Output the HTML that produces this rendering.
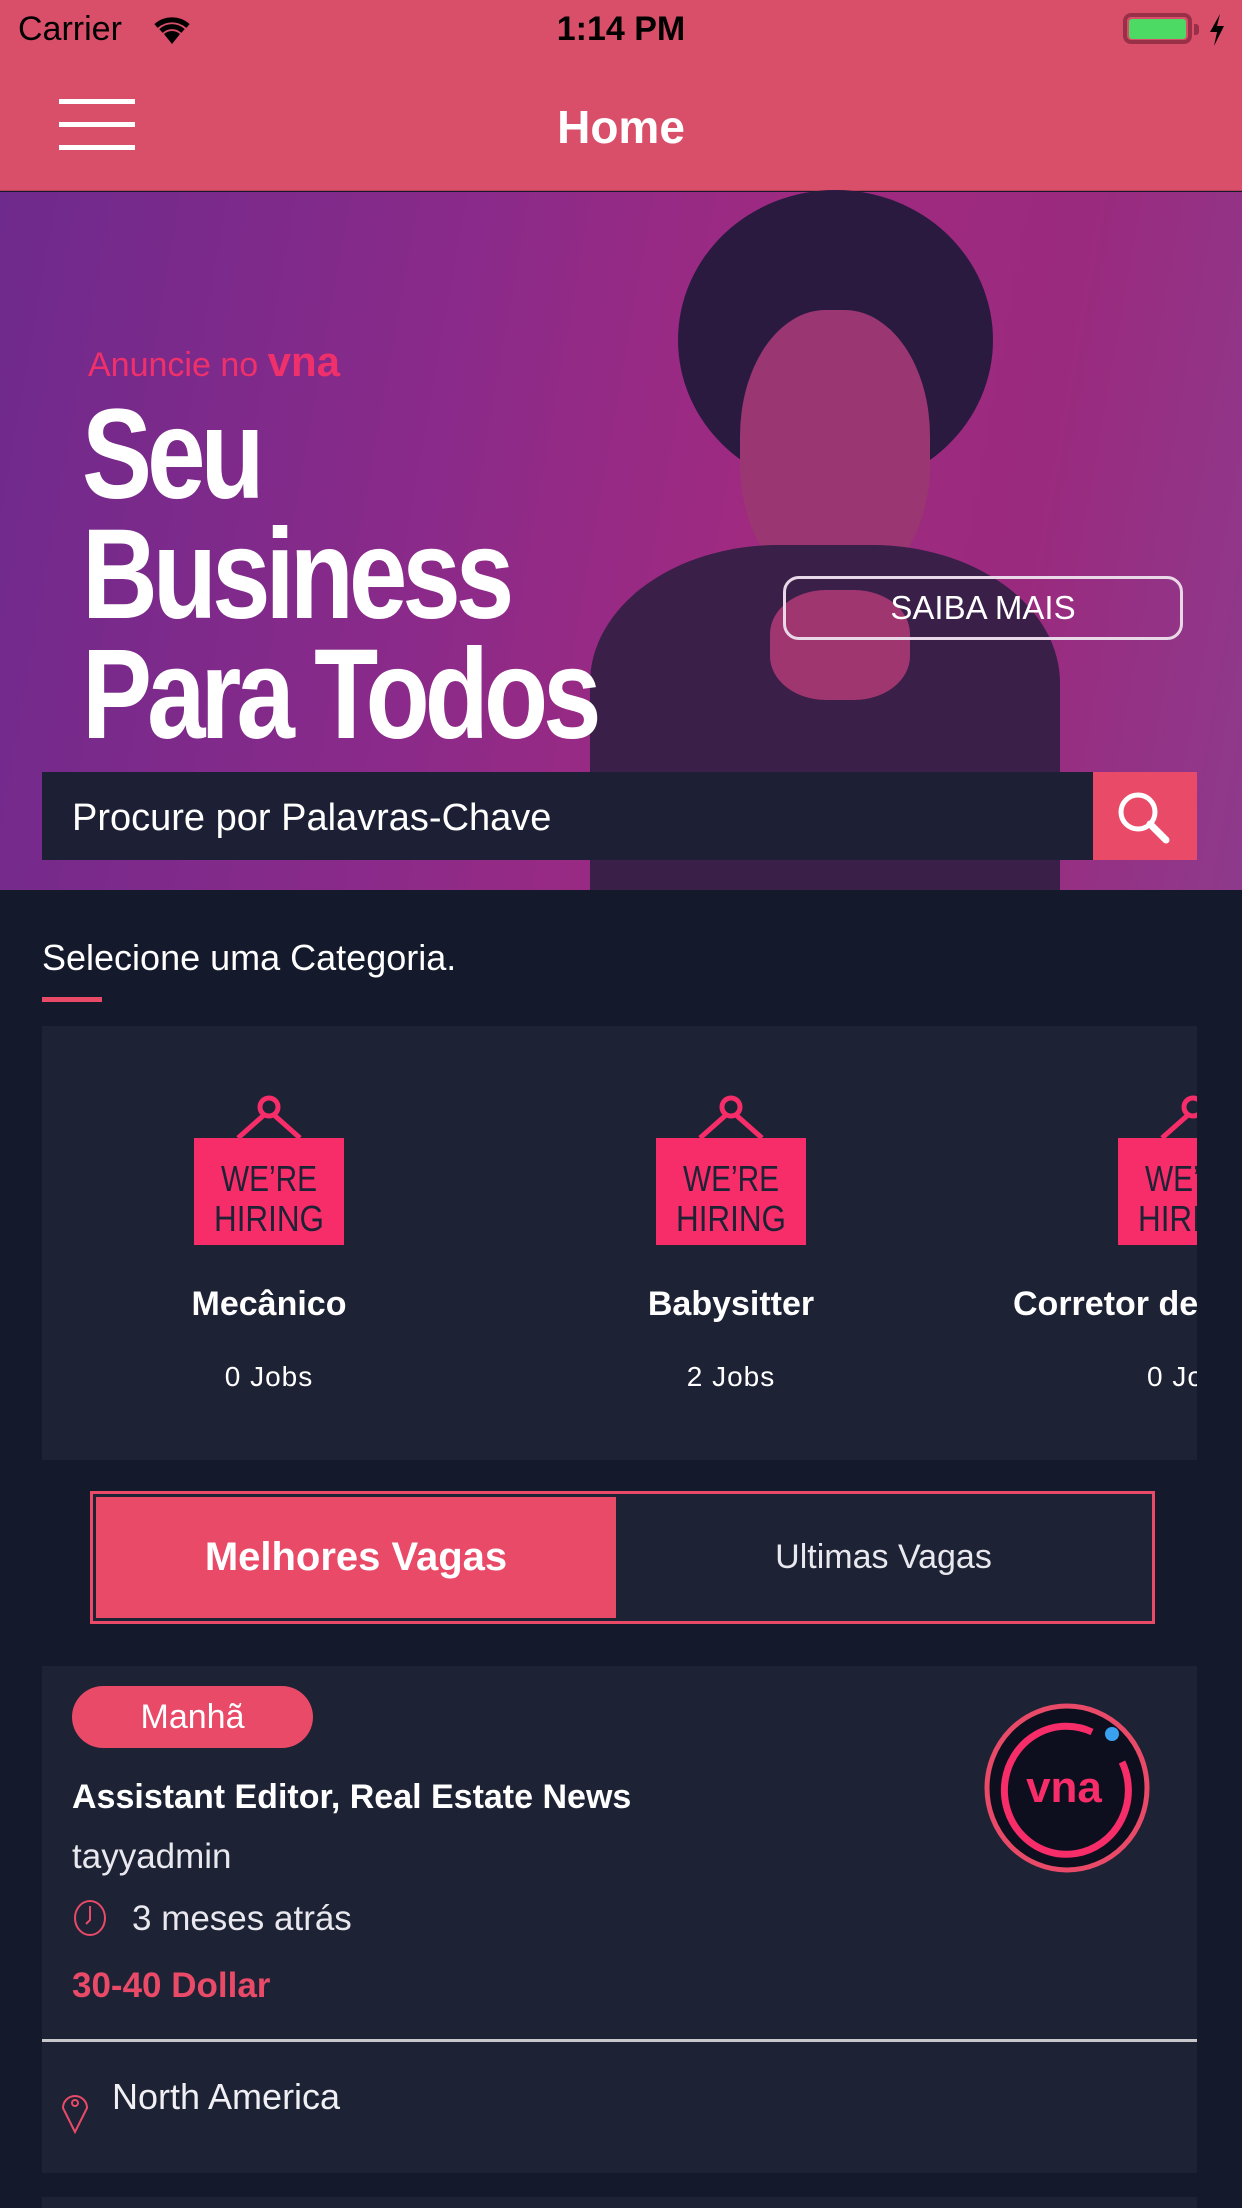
<!DOCTYPE html>
<html><head><meta charset="utf-8"><style>
*{margin:0;padding:0;box-sizing:border-box}
body{width:1242px;height:2208px;overflow:hidden;background:#141a2c;font-family:"Liberation Sans",sans-serif;position:relative;color:#fff}
.abs{position:absolute}
</style></head><body>
<div class="abs" style="left:0;top:0;width:1242px;height:191px;background:#d94f6a;border-bottom:1px solid #b8405a"></div>
<div class="abs" style="left:18px;top:10px;font-size:34px;color:#000">Carrier</div>
<svg class="abs" style="left:150px;top:14px" width="44" height="32" viewBox="0 0 44 32"><path d="M22 30 L14 20 A12 12 0 0 1 30 20 Z" fill="#000"/><path d="M6 12 A24 24 0 0 1 38 12" stroke="#000" stroke-width="5" fill="none"/><path d="M11 17 A16 16 0 0 1 33 17" stroke="#000" stroke-width="5" fill="none"/></svg>
<div class="abs" style="left:0;width:1242px;top:10px;text-align:center;font-size:34px;font-weight:bold;color:#000">1:14 PM</div>
<div class="abs" style="left:1123px;top:13px;width:69px;height:31px;border:4px solid #9a2f48;border-radius:8px"></div>
<div class="abs" style="left:1129px;top:19px;width:57px;height:20px;background:#4cd964;border-radius:3px"></div>
<div class="abs" style="left:1194px;top:24px;width:5px;height:11px;background:#9a2f48;border-radius:0 3px 3px 0"></div>
<svg class="abs" style="left:1208px;top:14px" width="18" height="32" viewBox="0 0 18 32"><path d="M12 0 L2 18 H9 L6 32 L16 12 H9 Z" fill="#000"/></svg>
<div class="abs" style="left:59px;top:99px;width:76px;height:5px;background:#fff"></div>
<div class="abs" style="left:59px;top:122px;width:76px;height:5px;background:#fff"></div>
<div class="abs" style="left:59px;top:145px;width:76px;height:5px;background:#fff"></div>
<div class="abs" style="left:0;width:1242px;top:100px;text-align:center;font-size:46px;font-weight:bold">Home</div>

<div class="abs" style="left:0;top:192px;width:1242px;height:698px;background:linear-gradient(100deg,#6e2a8c 0%,#8a2a8a 35%,#a02a80 60%,#9a2a7e 80%,#8e3a8c 100%)"></div>
<div class="abs" style="left:678px;top:190px;width:315px;height:300px;border-radius:50%;background:#2a1a40"></div>
<div class="abs" style="left:740px;top:310px;width:190px;height:280px;border-radius:45%;background:#9a3672"></div>
<div class="abs" style="left:590px;top:545px;width:470px;height:345px;border-radius:40% 40% 0 0;background:#3a1f48"></div>
<div class="abs" style="left:770px;top:590px;width:140px;height:110px;border-radius:40%;background:#a03670"></div>
<div class="abs" style="left:88px;top:338px;font-size:34px;color:#f0306a">Anuncie no <b style="font-size:42px">vna</b></div>
<div class="abs" style="left:82px;top:395px;font-size:128px;font-weight:bold;line-height:120px;letter-spacing:-6px;transform:scaleX(0.82);transform-origin:0 0">Seu<br>Business<br>Para Todos</div>
<div class="abs" style="left:783px;top:576px;width:400px;height:64px;border:3px solid #e8d8e8;border-radius:16px;text-align:center;line-height:58px;font-size:33px">SAIBA MAIS</div>
<div class="abs" style="left:42px;top:772px;width:1051px;height:88px;background:#1d2034;font-size:38px;line-height:92px;padding-left:30px">Procure por Palavras-Chave</div>
<div class="abs" style="left:1093px;top:772px;width:104px;height:88px;background:#e84a68"></div>
<svg class="abs" style="left:1112px;top:786px" width="64" height="64" viewBox="0 0 64 64"><circle cx="26" cy="26" r="17" stroke="#fff" stroke-width="5" fill="none"/><path d="M38 38 L54 54" stroke="#fff" stroke-width="7" stroke-linecap="round"/></svg>

<div class="abs" style="left:42px;top:937px;font-size:36px">Selecione uma Categoria.</div>
<div class="abs" style="left:42px;top:997px;width:60px;height:5px;background:#e84a68"></div>
<div class="abs" style="left:42px;top:1026px;width:1155px;height:434px;background:#1e2235"></div>
<div class="abs" style="left:42px;top:1026px;width:1155px;height:434px;overflow:hidden">
 <div class="abs" style="left:152px;top:69px"><svg width="150" height="150" viewBox="0 0 150 150"><circle cx="75" cy="12" r="9" stroke="#f72d6a" stroke-width="5" fill="none"/><path d="M70 20 L44 43 M80 20 L106 43" stroke="#f72d6a" stroke-width="5"/><rect x="0" y="43" width="150" height="107" fill="#f72d6a"/><text x="75" y="96" text-anchor="middle" font-family="Liberation Sans Narrow,Liberation Sans" font-size="36" fill="#1e2235" textLength="96" lengthAdjust="spacingAndGlyphs">WE’RE</text><text x="75" y="136" text-anchor="middle" font-family="Liberation Sans Narrow,Liberation Sans" font-size="36" fill="#1e2235" textLength="110" lengthAdjust="spacingAndGlyphs">HIRING</text></svg></div>
 <div class="abs" style="left:614px;top:69px"><svg width="150" height="150" viewBox="0 0 150 150"><circle cx="75" cy="12" r="9" stroke="#f72d6a" stroke-width="5" fill="none"/><path d="M70 20 L44 43 M80 20 L106 43" stroke="#f72d6a" stroke-width="5"/><rect x="0" y="43" width="150" height="107" fill="#f72d6a"/><text x="75" y="96" text-anchor="middle" font-family="Liberation Sans Narrow,Liberation Sans" font-size="36" fill="#1e2235" textLength="96" lengthAdjust="spacingAndGlyphs">WE’RE</text><text x="75" y="136" text-anchor="middle" font-family="Liberation Sans Narrow,Liberation Sans" font-size="36" fill="#1e2235" textLength="110" lengthAdjust="spacingAndGlyphs">HIRING</text></svg></div>
 <div class="abs" style="left:1076px;top:69px"><svg width="150" height="150" viewBox="0 0 150 150"><circle cx="75" cy="12" r="9" stroke="#f72d6a" stroke-width="5" fill="none"/><path d="M70 20 L44 43 M80 20 L106 43" stroke="#f72d6a" stroke-width="5"/><rect x="0" y="43" width="150" height="107" fill="#f72d6a"/><text x="75" y="96" text-anchor="middle" font-family="Liberation Sans Narrow,Liberation Sans" font-size="36" fill="#1e2235" textLength="96" lengthAdjust="spacingAndGlyphs">WE’RE</text><text x="75" y="136" text-anchor="middle" font-family="Liberation Sans Narrow,Liberation Sans" font-size="36" fill="#1e2235" textLength="110" lengthAdjust="spacingAndGlyphs">HIRING</text></svg></div>
 <div class="abs" style="left:77px;width:300px;top:259px;text-align:center;font-size:34px;font-weight:bold">Mecânico</div>
 <div class="abs" style="left:77px;width:300px;top:335px;text-align:center;font-size:28px;letter-spacing:1px">0 Jobs</div>
 <div class="abs" style="left:539px;width:300px;top:259px;text-align:center;font-size:34px;font-weight:bold">Babysitter</div>
 <div class="abs" style="left:539px;width:300px;top:335px;text-align:center;font-size:28px;letter-spacing:1px">2 Jobs</div>
 <div class="abs" style="left:971px;width:400px;top:259px;font-size:34px;font-weight:bold">Corretor de</div>
 <div class="abs" style="left:1105px;width:200px;top:335px;font-size:28px;letter-spacing:1px">0 Jobs</div>
</div>

<div class="abs" style="left:90px;top:1491px;width:1065px;height:133px;border:3px solid #e84a68;background:#1e2235"></div>
<div class="abs" style="left:96px;top:1497px;width:520px;height:121px;background:#e84a68;text-align:center;line-height:121px;font-size:40px;font-weight:bold">Melhores Vagas</div>
<div class="abs" style="left:616px;top:1497px;width:535px;height:121px;text-align:center;line-height:121px;font-size:34px;color:#e8e8ee">Ultimas Vagas</div>

<div class="abs" style="left:42px;top:1666px;width:1155px;height:507px;background:#1e2235"></div>
<div class="abs" style="left:72px;top:1686px;width:241px;height:62px;border-radius:31px;background:#e84a68;text-align:center;line-height:62px;font-size:34px">Manhã</div>
<div class="abs" style="left:72px;top:1778px;font-size:34px;font-weight:bold">Assistant Editor, Real Estate News</div>
<div class="abs" style="left:72px;top:1837px;font-size:35px;color:#e8e8ee">tayyadmin</div>
<svg class="abs" style="left:72px;top:1898px" width="36" height="40" viewBox="0 0 36 40"><ellipse cx="18" cy="20" rx="15" ry="17" stroke="#e84a68" stroke-width="2" fill="none"/><path d="M18 8 V22 L14 26" stroke="#e84a68" stroke-width="2" fill="none"/></svg>
<div class="abs" style="left:132px;top:1899px;font-size:35px;color:#e8e8ee">3 meses atrás</div>
<div class="abs" style="left:72px;top:1966px;font-size:35px;font-weight:bold;color:#e84a68">30-40 Dollar</div>
<div class="abs" style="left:42px;top:2039px;width:1155px;height:3px;background:#c8c8cc"></div>
<svg class="abs" style="left:60px;top:2086px" width="30" height="48" viewBox="0 0 30 48"><path d="M15 46 L3 22 A12 12 0 1 1 27 22 Z" stroke="#e84a68" stroke-width="2" fill="none"/><circle cx="15" cy="17" r="3" stroke="#e84a68" stroke-width="2" fill="none"/></svg>
<div class="abs" style="left:112px;top:2076px;font-size:36px;color:#f0f0f4">North America</div>
<svg class="abs" style="left:982px;top:1702px" width="170" height="172" viewBox="0 0 170 172"><ellipse cx="85" cy="86" rx="80" ry="82" fill="#0e0f1e" stroke="#e84a68" stroke-width="5"/><path d="M140 60 A62 64 0 1 1 110 30" stroke="#f72d6a" stroke-width="7" fill="none"/><circle cx="130" cy="32" r="7" fill="#3aa0f0"/><text x="82" y="100" text-anchor="middle" font-size="44" font-weight="bold" fill="#f72d6a" font-family="Liberation Sans">vna</text></svg>
<div class="abs" style="left:42px;top:2197px;width:1155px;height:11px;background:#1e2235"></div>
</body></html>
